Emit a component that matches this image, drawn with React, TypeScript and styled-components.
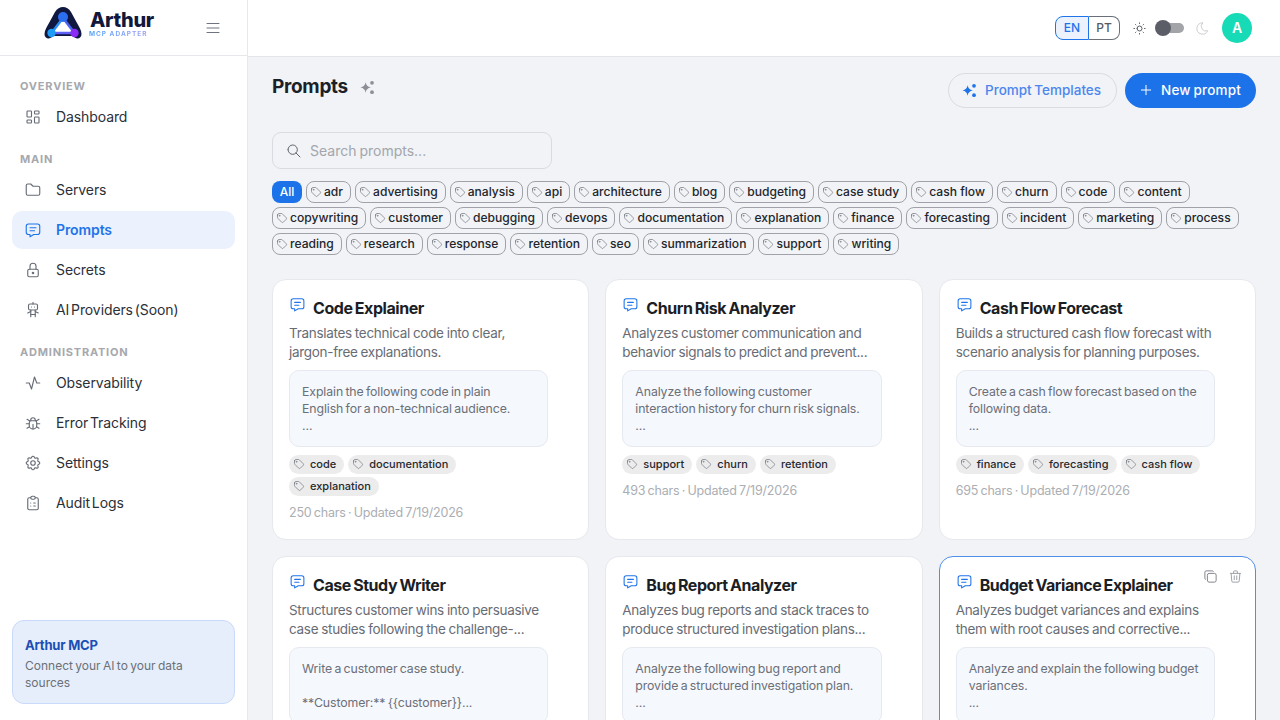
import React from 'react';
import styled, { createGlobalStyle } from 'styled-components';
import {
  TbLayoutDashboard, TbFolder, TbMessage, TbLock, TbRobot, TbActivity, TbBug, TbSettings,
  TbClipboardList, TbTag, TbSearch, TbPlus, TbSun, TbMoon, TbCopy, TbTrash, TbMenu2,
} from 'react-icons/tb';

const FONT = `"Inter", "Noto Sans", "Liberation Sans", sans-serif`;

const GlobalStyle = createGlobalStyle`
  html, body { margin: 0; padding: 0; height: 100%; overflow: hidden; }
  body { font-family: ${FONT}; background: #f1f3f6; color: #1b1f27; }
  * { box-sizing: border-box; }
  svg { stroke-width: 1.5; }
`;

const navGroups = [
  { label: 'OVERVIEW', items: [{ name: 'Dashboard', icon: TbLayoutDashboard }] },
  {
    label: 'MAIN',
    items: [
      { name: 'Servers', icon: TbFolder },
      { name: 'Prompts', icon: TbMessage, active: true },
      { name: 'Secrets', icon: TbLock },
      { name: 'AI Providers (Soon)', icon: TbRobot },
    ],
  },
  {
    label: 'ADMINISTRATION',
    items: [
      { name: 'Observability', icon: TbActivity },
      { name: 'Error Tracking', icon: TbBug },
      { name: 'Settings', icon: TbSettings },
      { name: 'Audit Logs', icon: TbClipboardList },
    ],
  },
];

const filterTags = [
  'adr', 'advertising', 'analysis', 'api', 'architecture', 'blog', 'budgeting', 'case study', 'cash flow', 'churn',
  'code', 'content', 'copywriting', 'customer', 'debugging', 'devops', 'documentation', 'explanation', 'finance',
  'forecasting', 'incident', 'marketing', 'process', 'reading', 'research', 'response', 'retention', 'seo',
  'summarization', 'support', 'writing',
];

type Prompt = {
  title: string;
  desc: string;
  body: string;
  tags?: string[];
  meta?: string;
  hovered?: boolean;
};

const prompts: Prompt[] = [
  {
    title: 'Code Explainer',
    desc: 'Translates technical code into clear,\njargon-free explanations.',
    body: 'Explain the following code in plain\nEnglish for a non-technical audience.\n...',
    tags: ['code', 'documentation', 'explanation'],
    meta: '250 chars · Updated 7/19/2026',
  },
  {
    title: 'Churn Risk Analyzer',
    desc: 'Analyzes customer communication and\nbehavior signals to predict and prevent...',
    body: 'Analyze the following customer\ninteraction history for churn risk signals.\n...',
    tags: ['support', 'churn', 'retention'],
    meta: '493 chars · Updated 7/19/2026',
  },
  {
    title: 'Cash Flow Forecast',
    desc: 'Builds a structured cash flow forecast with\nscenario analysis for planning purposes.',
    body: 'Create a cash flow forecast based on the\nfollowing data.\n...',
    tags: ['finance', 'forecasting', 'cash flow'],
    meta: '695 chars · Updated 7/19/2026',
  },
  {
    title: 'Case Study Writer',
    desc: 'Structures customer wins into persuasive\ncase studies following the challenge-...',
    body: 'Write a customer case study.\n\n**Customer:** {{customer}}...',
  },
  {
    title: 'Bug Report Analyzer',
    desc: 'Analyzes bug reports and stack traces to\nproduce structured investigation plans...',
    body: 'Analyze the following bug report and\nprovide a structured investigation plan.\n...',
  },
  {
    title: 'Budget Variance Explainer',
    desc: 'Analyzes budget variances and explains\nthem with root causes and corrective...',
    body: 'Analyze and explain the following budget\nvariances.\n...',
    hovered: true,
  },
];

function SparkDots({ size = 15 }: { size?: number }) {
  return (
    <svg width={size} height={size} viewBox="0 0 16 16" fill="currentColor">
      <path d="M6 2.500c.6 3.300 2.200 4.900 5.500 5.500-3.300.6-4.900 2.200-5.500 5.500C5.400 10.200 3.800 8.600.5 8 3.800 7.400 5.400 5.800 6 2.500z" />
      <circle cx="12.800" cy="3" r="2" />
      <circle cx="12.800" cy="13" r="2" />
    </svg>
  );
}

function ArthurLogo() {
  return (
    <svg width="38" height="32" viewBox="0 0 38 32">
      <path
        d="M0.500 27 C0.500 23 3 20 5 16 L11 5 C13 1.500 16 0 19 0 C22 0 25 1.500 27 5 L33 16 C35 20 37.500 23 37.500 27 C37.500 32 32 33 29 29 L9 29 C6 33 0.500 32 0.500 27 Z"
        fill="#10183f"
      />
      <path d="M19 11 L7.500 26 L30.500 26 Z" fill="#fff" />
      <path d="M19 11 L7.500 26" stroke="#2c8cf6" strokeWidth="2.500" />
      <path d="M19 11 L30.500 26" stroke="#4a63f5" strokeWidth="2.500" />
      <path d="M7.500 26 L30.500 26" stroke="#5e60f6" strokeWidth="2.500" />
      <circle cx="19" cy="10" r="5" fill="#2b6ff0" />
      <circle cx="7.500" cy="26" r="4.200" fill="#1e9bf5" />
      <circle cx="30.500" cy="26" r="4.200" fill="#8a2cf5" />
    </svg>
  );
}

export default function App() {
  return (
    <Shell>
      <GlobalStyle />
      <Sidebar>
        <Brand>
          <BrandLogo>
            <ArthurLogo />
            <BrandText>
              <BrandName>Arthur</BrandName>
              <BrandSub>MCP ADAPTER</BrandSub>
            </BrandText>
          </BrandLogo>
          <MenuButton><TbMenu2 size={18} /></MenuButton>
        </Brand>
        <Nav>
          {navGroups.map((group) => (
            <NavGroup key={group.label}>
              <NavLabel>{group.label}</NavLabel>
              {group.items.map((item) => (
                <NavItem key={item.name} $active={!!item.active}>
                  <item.icon size={18} />
                  <span>{item.name}</span>
                </NavItem>
              ))}
            </NavGroup>
          ))}
        </Nav>
        <PromoCard>
          <PromoTitle>Arthur MCP</PromoTitle>
          <PromoText>Connect your AI to your data sources</PromoText>
        </PromoCard>
      </Sidebar>

      <Content>
        <Topbar>
          <LangSwitch>
            <LangButton $active>EN</LangButton>
            <LangButton>PT</LangButton>
          </LangSwitch>
          <ThemeIcon $light><TbSun size={15} /></ThemeIcon>
          <ThemeToggle><ThemeKnob /></ThemeToggle>
          <ThemeIcon><TbMoon size={15} /></ThemeIcon>
          <Avatar>A</Avatar>
        </Topbar>

        <Main>
          <PageHeader>
            <TitleRow>
              <PageTitle>Prompts</PageTitle>
              <TitleIcon><SparkDots /></TitleIcon>
            </TitleRow>
            <HeaderActions>
              <OutlineButton><SparkDots />Prompt Templates</OutlineButton>
              <PrimaryButton><TbPlus size={16} />New prompt</PrimaryButton>
            </HeaderActions>
          </PageHeader>

          <SearchBox>
            <TbSearch size={16} />
            <SearchInput placeholder="Search prompts..." readOnly />
          </SearchBox>

          <FilterRow>
            <AllChip>All</AllChip>
            {filterTags.map((tag) => (
              <FilterChip key={tag}><TbTag size={12} />{tag}</FilterChip>
            ))}
          </FilterRow>

          <CardGrid>
            {prompts.map((prompt) => (
              <PromptCard key={prompt.title} $hovered={!!prompt.hovered}>
                {prompt.hovered && (
                  <CardActions>
                    <TbCopy size={15} />
                    <TbTrash size={15} />
                  </CardActions>
                )}
                <CardTitleRow>
                  <TbMessage size={17} />
                  <CardTitle>{prompt.title}</CardTitle>
                </CardTitleRow>
                <CardDesc>{prompt.desc}</CardDesc>
                <PromptBody>{prompt.body}</PromptBody>
                {prompt.tags && (
                  <CardTags>
                    {prompt.tags.map((tag) => (
                      <CardTag key={tag}><TbTag size={12} />{tag}</CardTag>
                    ))}
                  </CardTags>
                )}
                {prompt.meta && <CardMeta>{prompt.meta}</CardMeta>}
              </PromptCard>
            ))}
          </CardGrid>
        </Main>
      </Content>
    </Shell>
  );
}

const Shell = styled.div`
  display: grid;
  grid-template-columns: 248px 1fr;
  height: 100vh;
  overflow: hidden;
`;

const Sidebar = styled.aside`
  display: flex;
  flex-direction: column;
  background: #fff;
  border-right: 1px solid #e6e8ec;
  height: 720px;
`;

const Brand = styled.div`
  display: flex;
  align-items: center;
  justify-content: space-between;
  height: 56px;
  padding: 0 25px 0 44px;
  border-bottom: 1px solid #e6e8ec;
`;

const BrandLogo = styled.div`
  display: flex;
  align-items: flex-start;
  gap: 8px;
  margin-top: -9px;
`;

const BrandText = styled.div`
  display: flex;
  flex-direction: column;
  padding-top: 4px;
`;

const BrandName = styled.div`
  font-size: 20px;
  font-weight: 800;
  line-height: 19px;
  color: #12183c;
  letter-spacing: -0.3px;
`;

const BrandSub = styled.div`
  margin-left: -1px;
  font-size: 6.500px;
  font-weight: 700;
  line-height: 8px;
  letter-spacing: 1px;
  color: transparent;
  background: linear-gradient(90deg, #4fa3f7, #a99cf8);
  -webkit-background-clip: text;
  background-clip: text;
`;

const MenuButton = styled.div`
  display: flex;
  color: #6f7480;
`;

const Nav = styled.nav`
  flex: 1;
  display: flex;
  flex-direction: column;
  gap: 13px;
  padding: 20px 12px 0;
`;

const NavGroup = styled.div`
  display: flex;
  flex-direction: column;
  gap: 2px;
`;

const NavLabel = styled.div`
  height: 20px;
  padding-left: 8px;
  font-size: 11px;
  font-weight: 700;
  line-height: 20px;
  letter-spacing: 0.8px;
  color: #a6a8ad;
`;

const NavItem = styled.div<{ $active?: boolean }>`
  display: flex;
  align-items: center;
  gap: 14px;
  height: 38px;
  padding-left: 12px;
  border-radius: 10px;
  font-size: 14px;
  font-weight: ${(p) => (p.$active ? 600 : 400)};
  letter-spacing: -0.1px;
  word-spacing: -2px;
  color: ${(p) => (p.$active ? '#1f74ea' : '#2b2f38')};
  background: ${(p) => (p.$active ? '#ebf2fd' : 'transparent')};

  span { margin-top: -2px; }

  svg {
    flex: none;
    color: ${(p) => (p.$active ? '#1f74ea' : '#666b75')};
  }
`;

const PromoCard = styled.div`
  margin: 0 12px 16px;
  height: 84px;
  padding: 15px 12px;
  border: 1px solid #c9dafa;
  border-radius: 12px;
  background: #e6eefb;
`;

const PromoTitle = styled.div`
  font-size: 13px;
  font-weight: 700;
  line-height: 18px;
  letter-spacing: -0.2px;
  color: #1a4fb5;
`;

const PromoText = styled.div`
  margin-top: 3px;
  font-size: 12px;
  line-height: 17px;
  word-spacing: -1px;
  color: #6b7078;
`;

const Content = styled.div`
  display: flex;
  flex-direction: column;
  min-width: 0;
  height: 720px;
`;

const Topbar = styled.header`
  flex: none;
  display: flex;
  align-items: center;
  justify-content: flex-end;
  height: 57px;
  padding: 0 28px 0 0;
  background: #fff;
  border-bottom: 1px solid #e3e5ea;
`;

const LangSwitch = styled.div`
  display: flex;
  margin-right: 12px;
`;

const LangButton = styled.div<{ $active?: boolean }>`
  width: ${(p) => (p.$active ? '34px' : '31px')};
  height: 24px;
  font-size: 12px;
  font-weight: 500;
  line-height: 21px;
  text-align: center;
  color: ${(p) => (p.$active ? '#1f74ea' : '#555a63')};
  background: ${(p) => (p.$active ? '#ebf2fd' : '#fff')};
  border: 1px solid ${(p) => (p.$active ? '#1f74ea' : '#6b7078')};
  border-left-width: ${(p) => (p.$active ? '1px' : '0')};
  border-radius: ${(p) => (p.$active ? '8px 0 0 8px' : '0 8px 8px 0')};
`;

const ThemeIcon = styled.div<{ $light?: boolean }>`
  display: flex;
  color: ${(p) => (p.$light ? '#4e525a' : '#c9cbd0')};
`;

const ThemeToggle = styled.div`
  position: relative;
  width: 28px;
  height: 10px;
  margin: 0 11px 0 9px;
  border-radius: 5px;
  background: #a2a4a8;
`;

const ThemeKnob = styled.div`
  position: absolute;
  left: -1px;
  top: -3px;
  width: 16px;
  height: 16px;
  border-radius: 50%;
  background: #5b5e66;
`;

const Avatar = styled.div`
  width: 30px;
  height: 30px;
  margin-left: 12px;
  border-radius: 50%;
  background: #17dab6;
  color: #fff;
  font-size: 14px;
  font-weight: 600;
  line-height: 30px;
  text-align: center;
`;

const Main = styled.main`
  flex: 1;
  overflow: hidden;
  padding: 16px 24px 0;
`;

const PageHeader = styled.div`
  display: flex;
  align-items: flex-start;
  justify-content: space-between;
  height: 59px;
`;

const TitleRow = styled.div`
  display: flex;
  align-items: center;
  gap: 12px;
  height: 28px;
`;

const PageTitle = styled.h1`
  margin: 0;
  font-size: 19px;
  font-weight: 700;
  line-height: 28px;
  letter-spacing: -0.3px;
  color: #1c1f26;
`;

const TitleIcon = styled.span`
  display: flex;
  color: #8c8f96;
`;

const HeaderActions = styled.div`
  display: flex;
  gap: 8px;
`;

const OutlineButton = styled.div`
  display: flex;
  align-items: center;
  gap: 8px;
  width: 169px;
  height: 35px;
  padding: 0 0 1px 13px;
  border: 1px solid #d9dbe0;
  border-radius: 18px;
  font-size: 13.500px;
  font-weight: 500;
  word-spacing: -1px;
  color: #4c86ee;

  svg { color: #1f74ea; }
`;

const PrimaryButton = styled.div`
  display: flex;
  align-items: center;
  gap: 7px;
  width: 131px;
  height: 35px;
  padding: 0 0 1px 13px;
  border-radius: 18px;
  background: #1c72e8;
  font-size: 13.500px;
  font-weight: 500;
  letter-spacing: 0.2px;
  word-spacing: -1px;
  color: #fff;
`;

const SearchBox = styled.div`
  display: flex;
  align-items: center;
  gap: 8px;
  width: 280px;
  height: 37px;
  padding: 0 13px;
  border: 1px solid #d9dbe0;
  border-radius: 9px;
  color: #5f636b;
`;

const SearchInput = styled.input`
  flex: 1;
  min-width: 0;
  border: 0;
  outline: 0;
  padding: 0;
  background: transparent;
  font-family: ${FONT};
  font-size: 14px;
  word-spacing: -1px;

  &::placeholder { color: #a3a6ac; opacity: 1; }
`;

const FilterRow = styled.div`
  display: flex;
  flex-wrap: wrap;
  gap: 4px;
  margin-top: 12px;
`;

const AllChip = styled.div`
  width: 30px;
  height: 22px;
  border-radius: 8px;
  background: #1c72e8;
  color: #fff;
  font-size: 12px;
  font-weight: 500;
  line-height: 21px;
  text-align: center;
`;

const FilterChip = styled.div`
  display: flex;
  align-items: center;
  gap: 2px;
  height: 22px;
  padding: 0 7px 1px 3px;
  border: 1px solid #9fa2a8;
  border-radius: 8px;
  font-size: 12.100px;
  font-weight: 500;
  color: #23262d;

  svg { flex: none; color: #777b83; }
`;

const CardGrid = styled.div`
  display: grid;
  grid-template-columns: repeat(3, 1fr);
  gap: 16px;
  margin-top: 24px;
`;

const PromptCard = styled.article<{ $hovered?: boolean }>`
  position: relative;
  display: flex;
  flex-direction: column;
  padding: 16px 16px 18px;
  background: #fff;
  border: 1px solid ${(p) => (p.$hovered ? '#4f8fe8' : '#e6e8ec')};
  border-radius: 14px;
`;

const CardActions = styled.div`
  position: absolute;
  top: 12px;
  right: 12px;
  display: flex;
  gap: 10px;
  color: #9a9da3;

  svg:first-child { color: #7b7e85; }
`;

const CardTitleRow = styled.div`
  display: flex;
  align-items: flex-start;
  gap: 7px;
  height: 24px;

  svg { flex: none; color: #1f74ea; }
`;

const CardTitle = styled.h3`
  margin: 0;
  font-size: 16px;
  font-weight: 700;
  line-height: 24px;
  letter-spacing: -0.45px;
  word-spacing: -1px;
  color: #1b1e25;
`;

const CardDesc = styled.p`
  margin: 4px 0 0;
  font-size: 13.500px;
  line-height: 19px;
  letter-spacing: -0.3px;
  word-spacing: -0.5px;
  white-space: pre-line;
  color: #686c75;
`;

const PromptBody = styled.div`
  margin: 8px 24px 0 0;
  height: 77px;
  padding: 12px 12px 0;
  border: 1px solid #e6e9ef;
  border-radius: 10px;
  background: #f5f8fd;
  font-size: 12.300px;
  line-height: 17px;
  letter-spacing: -0.1px;
  word-spacing: -1px;
  white-space: pre-line;
  color: #6b6f78;
`;

const CardTags = styled.div`
  display: flex;
  flex-wrap: wrap;
  gap: 3px 4px;
  margin: 8px 24px 0 0;
`;

const CardTag = styled.div`
  display: flex;
  align-items: center;
  gap: 5px;
  height: 19px;
  padding: 0 8px 1px 4px;
  border-radius: 10px;
  background: #ececed;
  font-size: 11px;
  font-weight: 500;
  color: #26292f;

  svg { flex: none; color: #777b83; }
`;

const CardMeta = styled.div`
  margin-top: 9px;
  font-size: 12.500px;
  line-height: 16px;
  letter-spacing: -0.2px;
  word-spacing: -1px;
  color: #abaeb3;
`;
